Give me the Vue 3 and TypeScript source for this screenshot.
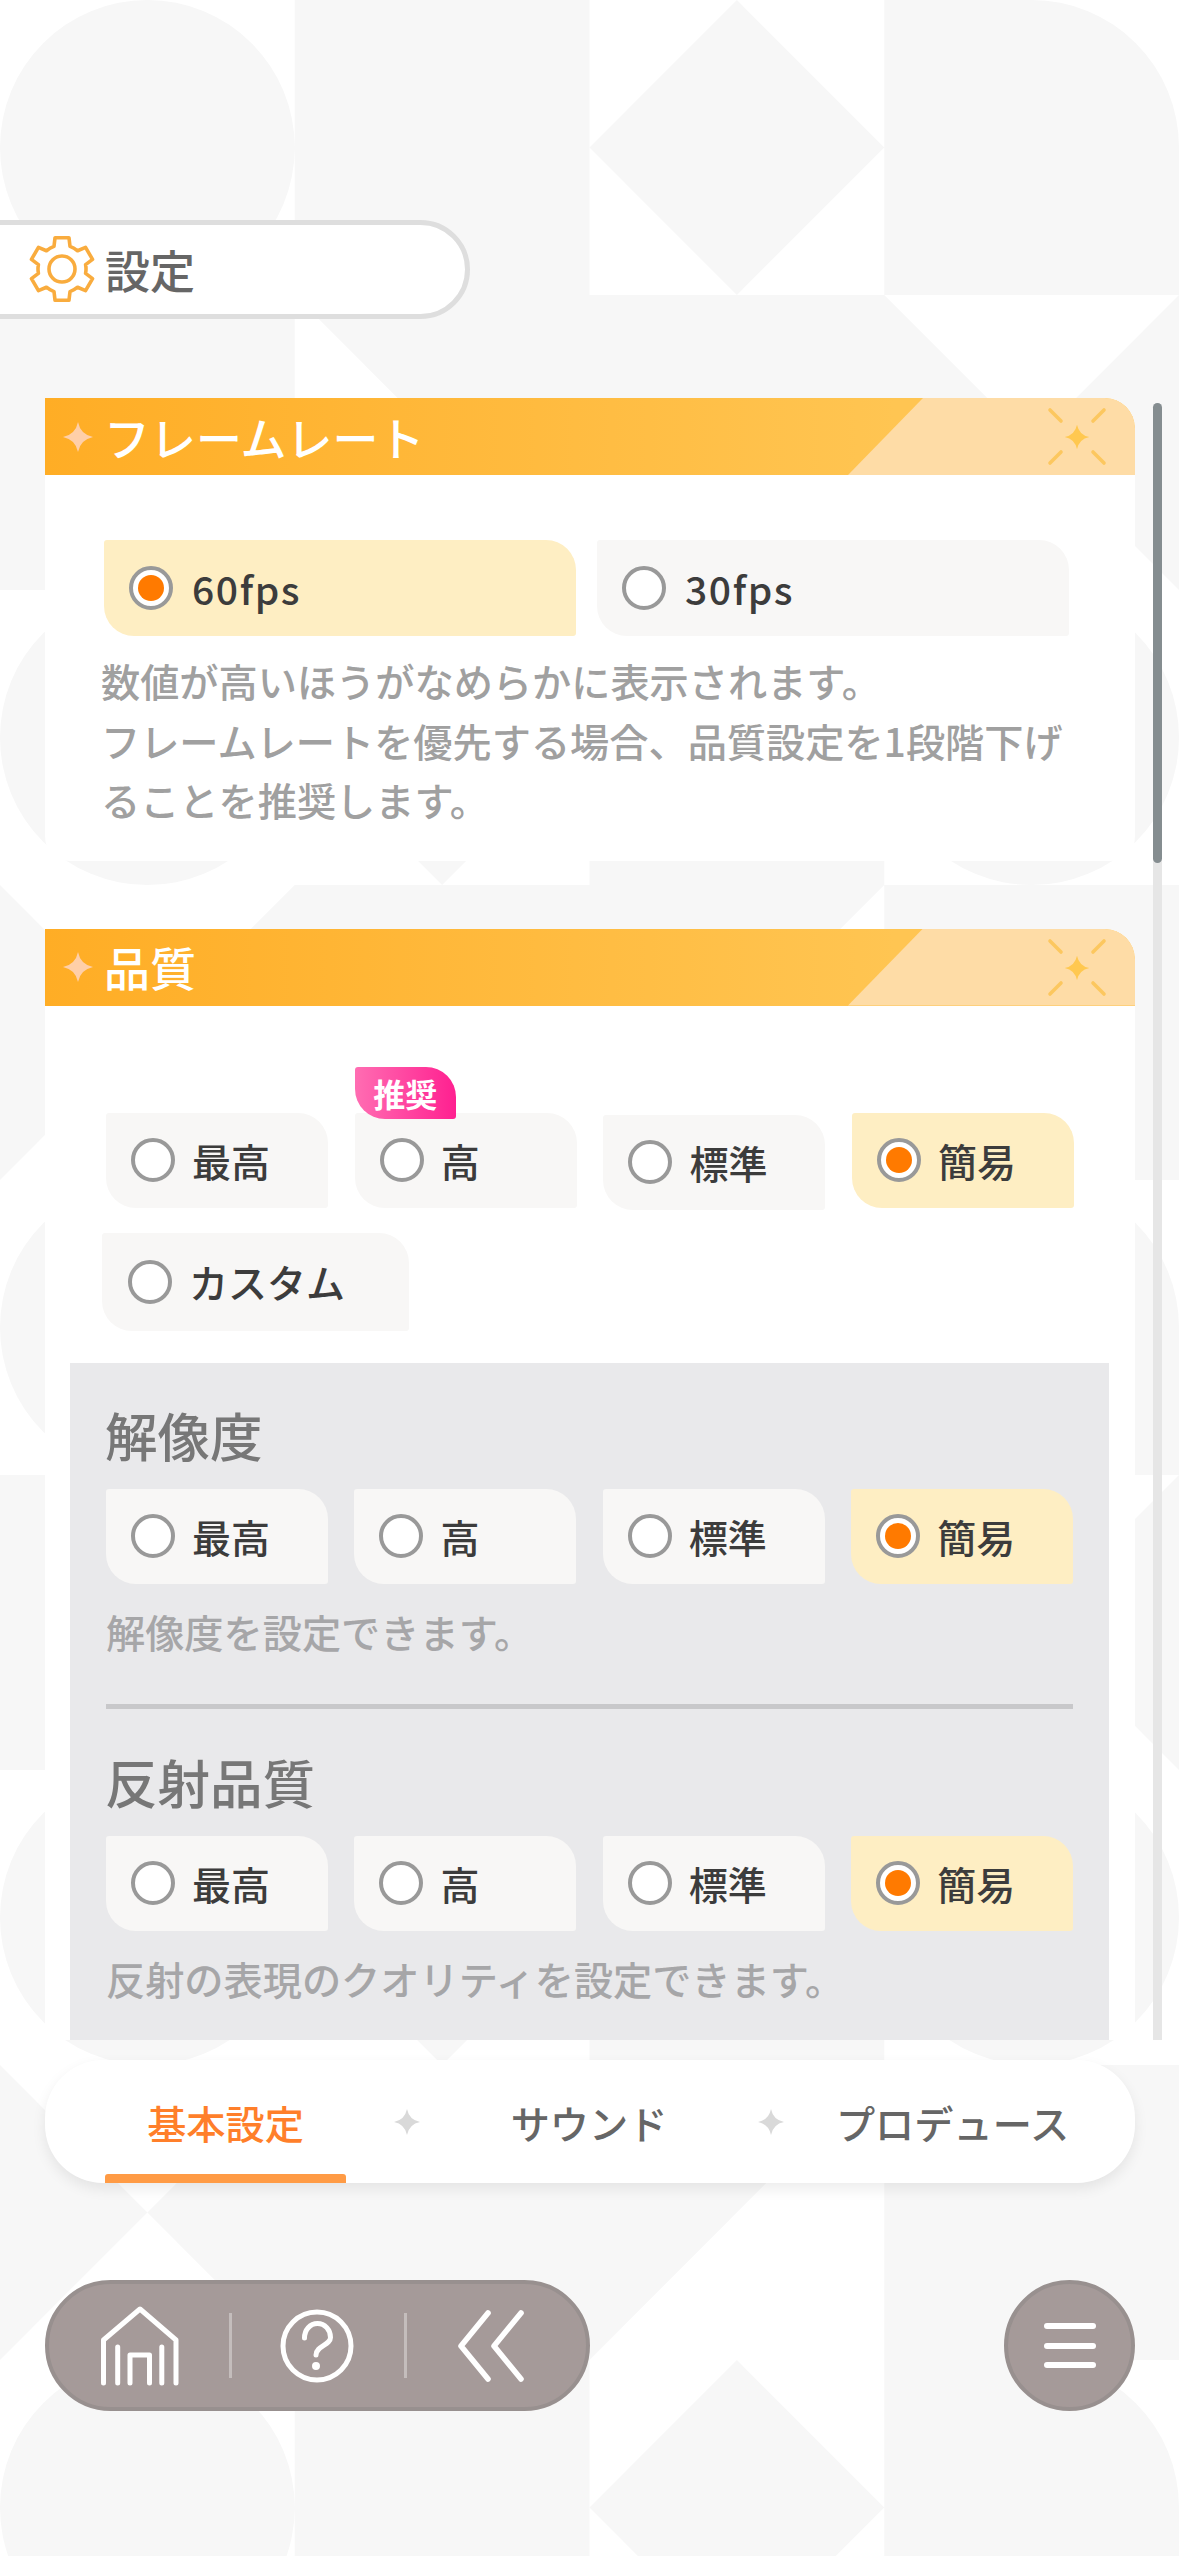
<script setup lang="ts">
const W = 294.75
const H = 295

function cellPath(kind: string, x: number, y: number): string {
  const r = W / 2
  const cx = x + W / 2
  const cy = y + H / 2
  const xr = x + W
  const yb = y + H
  switch (kind) {
    case 'circle':
      return `M${x},${cy}A${r},${H / 2} 0 1 1 ${xr},${cy}A${r},${H / 2} 0 1 1 ${x},${cy}Z`
    case 'solid':
      return `M${x},${y}H${xr}V${yb}H${x}Z`
    case 'diamond':
      return `M${cx},${y}L${xr},${cy}L${cx},${yb}L${x},${cy}Z`
    case 'roundTR':
      return `M${x},${y}H${cx}A${r},${H / 2} 0 0 1 ${xr},${cy}V${yb}H${x}Z`
    case 'triTR':
      return `M${x},${y}H${xr}V${yb}Z`
    case 'triUL':
      return `M${x},${y}H${xr}L${x},${yb}Z`
    case 'bowtie':
      return `M${x},${y}L${cx},${cy}L${x},${yb}ZM${xr},${y}V${yb}L${cx},${cy}Z`
  }
  return ''
}

const pattern: string[][] = [
  ['circle', 'solid', 'diamond', 'roundTR'],
  ['solid', 'triTR', 'solid', 'bowtie'],
  ['circle', 'diamond', 'solid', 'circle'],
  ['bowtie', 'solid', 'triUL', 'solid'],
]

let bgD = ''
for (let row = 0; row < 9; row++) {
  for (let col = 0; col < 4; col++) {
    bgD += cellPath(pattern[row % 4][col], col * W, row * H)
  }
}

function gearPath(): string {
  const out = 32
  const inner = 24
  const parts: string[] = []
  for (let i = 0; i < 6; i++) {
    const a = (i * Math.PI) / 3 - Math.PI / 2
    const pts = [
      [inner, a - 0.34],
      [out, a - 0.22],
      [out, a + 0.22],
      [inner, a + 0.34],
    ].map(([rad, t]) => [36 + rad * Math.cos(t), 36 + rad * Math.sin(t)])
    const p = pts.map((q) => q.map((v) => v.toFixed(2)).join(','))
    parts.push(
      i === 0 ? `M${p[0]}L${p[1]}L${p[2]}L${p[3]}` : `A${inner},${inner} 0 0 1 ${p[0]}L${p[1]}L${p[2]}L${p[3]}`,
    )
  }
  const a0 = -Math.PI / 2 - 0.34
  const end = `${(36 + inner * Math.cos(a0)).toFixed(2)},${(36 + inner * Math.sin(a0)).toFixed(2)}`
  return parts.join('') + `A${inner},${inner} 0 0 1 ${end}Z`
}
const gear = gearPath()

const star = 'M0,-15Q2.5,-2.5 15,0Q2.5,2.5 0,15Q-2.5,2.5 -15,0Q-2.5,-2.5 0,-15Z'

interface Opt {
  label: string
  on?: boolean
  badge?: string
  low?: boolean
}

const levels: Opt[] = [{ label: '最高' }, { label: '高' }, { label: '標準' }, { label: '簡易', on: true }]
const qualityRow: Opt[] = [
  { label: '最高' },
  { label: '高', badge: '推奨' },
  { label: '標準', low: true },
  { label: '簡易', on: true },
]
const subs = [
  { title: '解像度', desc: '解像度を設定できます。' },
  { title: '反射品質', desc: '反射の表現のクオリティを設定できます。' },
]
const sections = ['フレームレート', '品質']
</script>

<template>
  <div class="page">
    <svg class="bg" width="1179" height="2556" viewBox="0 0 1179 2556">
      <path :d="bgD" fill="#f7f7f7" />
    </svg>

    <div class="title-pill">
      <svg class="gear" width="72" height="72" viewBox="0 0 72 72">
        <path :d="gear" fill="none" stroke="#f9ac3e" stroke-width="3.6" stroke-linejoin="round" />
        <circle cx="36" cy="36" r="13" fill="none" stroke="#f9ac3e" stroke-width="3.6" />
      </svg>
      <span class="title-text">設定</span>
    </div>

    <div class="scroll">
      <div class="track"><div class="thumb"></div></div>

      <section class="panel">
        <header class="head">
          <div class="head-light"></div>
          <svg class="head-star" width="30" height="30" viewBox="-15 -15 30 30"><path :d="star" fill="#ffcfa8" /></svg>
          <span class="head-text">{{ sections[0] }}</span>
          <svg class="head-spark" width="60" height="60" viewBox="-30 -30 60 60">
            <path :d="star" fill="#ffc850" transform="scale(.82)" />
            <path d="M-27,-27L-16,-16M27,-27L16,-16M-27,26L-16,15M27,26L16,15" stroke="#fcc75f" stroke-width="3.6" stroke-linecap="round" />
          </svg>
        </header>
        <div class="body-fps">
          <div class="row row-fps">
            <label class="opt opt-fps on"><span class="radio"><i></i></span><span class="fps">60fps</span></label>
            <label class="opt opt-fps"><span class="radio"></span><span class="fps">30fps</span></label>
          </div>
          <p class="desc desc-fps">数値が高いほうがなめらかに表示されます。<br />フレームレートを優先する場合、品質設定を1段階下げ<br />ることを推奨します。</p>
        </div>
      </section>

      <section class="panel panel-quality">
        <header class="head">
          <div class="head-light"></div>
          <svg class="head-star" width="30" height="30" viewBox="-15 -15 30 30"><path :d="star" fill="#ffcfa8" /></svg>
          <span class="head-text">{{ sections[1] }}</span>
          <svg class="head-spark" width="60" height="60" viewBox="-30 -30 60 60">
            <path :d="star" fill="#ffc850" transform="scale(.82)" />
            <path d="M-27,-27L-16,-16M27,-27L16,-16M-27,26L-16,15M27,26L16,15" stroke="#fcc75f" stroke-width="3.6" stroke-linecap="round" />
          </svg>
        </header>
        <div class="body-quality">
          <div class="row row-levels">
            <label v-for="o in qualityRow" :key="o.label" class="opt" :class="{ on: o.on, low: o.low }">
              <span v-if="o.badge" class="badge">{{ o.badge }}</span>
              <span class="radio"><i v-if="o.on"></i></span><span>{{ o.label }}</span>
            </label>
          </div>
          <div class="row row-custom">
            <label class="opt opt-custom"><span class="radio"></span><span>カスタム</span></label>
          </div>

          <div class="sub-box">
            <template v-for="(s, i) in subs" :key="s.title">
              <div v-if="i > 0" class="divider"></div>
              <h3 class="sub-title">{{ s.title }}</h3>
              <div class="row row-sub">
                <label v-for="o in levels" :key="o.label" class="opt" :class="{ on: o.on }">
                  <span class="radio"><i v-if="o.on"></i></span><span>{{ o.label }}</span>
                </label>
              </div>
              <p class="desc desc-sub">{{ s.desc }}</p>
            </template>
          </div>
        </div>
      </section>
    </div>

    <nav class="tabs">
      <div class="tab active">基本設定</div>
      <div class="tab-sep"><svg width="26" height="28" viewBox="-15 -15 30 30"><path :d="star" fill="#d9d9d9" /></svg></div>
      <div class="tab">サウンド</div>
      <div class="tab-sep"><svg width="26" height="28" viewBox="-15 -15 30 30"><path :d="star" fill="#d9d9d9" /></svg></div>
      <div class="tab">プロデュース</div>
    </nav>

    <div class="bottom">
      <div class="nav-pill">
        <svg width="78" height="82" viewBox="1 0 78 82" fill="none" stroke="#fff" stroke-width="5" stroke-linecap="round" stroke-linejoin="round">
          <path d="M3.5,78V35L40,4L76,35V78M17.7,42V78M61.8,42V78M30,78V50H49.5V78" />
        </svg>
        <span class="nav-sep"></span>
        <svg class="q" width="74" height="74" viewBox="-37 -37 74 74" fill="none" stroke="#fff" stroke-width="5" stroke-linecap="round">
          <circle r="34" />
          <path d="M-12.5,-8C-12.5,-16 -7,-22.5 .5,-22.5C8,-22.5 13.5,-16 13.5,-8.5C13.5,-1 -1,0 -1,9" />
          <circle cx="-1" cy="20" r="2.5" fill="#fff" stroke-width="3" />
        </svg>
        <span class="nav-sep"></span>
        <svg width="70" height="74" viewBox="0 0 70 74" fill="none" stroke="#fff" stroke-width="5.6" stroke-linecap="round" stroke-linejoin="round">
          <path d="M32,4L5,37L32,70M65,4L38,37L65,70" />
        </svg>
      </div>
      <button class="menu" type="button" aria-label="menu">
        <span></span><span></span><span></span>
      </button>
    </div>
  </div>
</template>

<style>
html,
body {
  margin: 0;
  background: #fff;
}
</style>

<style scoped>
.page {
  position: relative;
  width: 1179px;
  height: 2556px;
  overflow: hidden;
  background: #fff;
  font-family: "Noto Sans CJK JP", "Noto Sans", sans-serif;
  padding-top: 220px;
  box-sizing: border-box;
}
.bg {
  position: absolute;
  left: 0;
  top: 0;
}
.title-pill {
  position: relative;
  box-sizing: border-box;
  width: 520px;
  height: 99px;
  margin-left: -50px;
  padding-left: 71px;
  display: flex;
  align-items: center;
  gap: 7px;
  background: #fff;
  border: 5px solid #dedede;
  border-radius: 50px;
}
.gear {
  margin-top: -2px;
}
.title-text {
  font-size: 45px;
  font-weight: 500;
  color: #666;
  line-height: 1;
}
.scroll {
  position: relative;
  height: 1642px;
  margin-top: 79px;
  padding-left: 45px;
  overflow: hidden;
}
.track {
  position: absolute;
  left: 1153px;
  top: 5px;
  bottom: 0;
  width: 9px;
  background: #e6e6e6;
  border-radius: 5px 5px 0 0;
}
.thumb {
  height: 460px;
  background: #858d90;
  border-radius: 5px;
}
.panel {
  position: relative;
  width: 1090px;
  background: rgba(255, 255, 255, 0.92);
  border-radius: 0 30px 24px 24px;
  overflow: hidden;
}
.panel-quality {
  margin-top: 68px;
}
.head {
  position: relative;
  height: 77px;
  display: flex;
  align-items: center;
  padding-left: 18px;
  gap: 11px;
  background: linear-gradient(90deg, #ffad25 0%, #ffc552 78%);
  border-radius: 0 30px 0 0;
  overflow: hidden;
}
.head-light {
  position: absolute;
  right: 0;
  top: 0;
  width: 287px;
  height: 100%;
  background: #fedca6;
  clip-path: polygon(75px 0, 100% 0, 100% 100%, 0 100%);
}
.head-star,
.head-text {
  position: relative;
}
.head-text {
  color: #fff;
  font-size: 46px;
  font-weight: 500;
  line-height: 1;
  margin-top: -2px;
}
.head-spark {
  position: absolute;
  left: 1002px;
  top: 9px;
}
.body-fps {
  padding: 65px 0 31px 58px;
}
.body-quality {
  padding-top: 107px;
}
.row {
  display: flex;
}
.row-fps {
  gap: 21px;
}
.row-levels,
.row-sub {
  gap: 26.7px;
}
.row-levels {
  margin-left: 61px;
}
.row-custom {
  margin: 25px 0 0 57px;
}
.opt {
  position: relative;
  box-sizing: border-box;
  width: 222px;
  height: 95px;
  display: flex;
  align-items: center;
  gap: 17px;
  padding-left: 25px;
  background: #f8f7f6;
  border-radius: 3px 30px 3px 30px;
  color: #3c3c3c;
  font-size: 39px;
  font-weight: 500;
  line-height: 1;
}
.opt.on {
  background: #feeec3;
}
.opt.low {
  transform: translateY(2px);
}
.fps {
  letter-spacing: 1.6px;
}
.opt-fps {
  width: 472px;
  height: 96px;
  gap: 19px;
}
.opt-fps:first-child {
  margin-left: 1px;
}
.opt-custom {
  width: 307px;
  height: 98px;
  padding-left: 26px;
}
.radio {
  box-sizing: border-box;
  flex: none;
  width: 44px;
  height: 44px;
  border-radius: 50%;
  border: 4.5px solid #999;
  background: #fff;
  display: flex;
  align-items: center;
  justify-content: center;
}
.radio i {
  display: block;
  width: 26px;
  height: 26px;
  border-radius: 50%;
  background: #ff7a00;
}
.badge {
  position: absolute;
  left: 0;
  top: -46px;
  width: 101px;
  height: 52px;
  display: flex;
  align-items: center;
  justify-content: center;
  background: linear-gradient(90deg, #ff6db2, #ff2090);
  border-radius: 3px 30px 3px 30px;
  color: #fff;
  font-size: 32px;
  font-weight: 700;
}
.desc {
  margin: 0;
  color: #a0a0a0;
  font-weight: 500;
  white-space: nowrap;
}
.desc-fps {
  margin: 15px 0 0 -2px;
  font-size: 39.2px;
  line-height: 59.5px;
}
.sub-box {
  width: 1039px;
  box-sizing: border-box;
  margin: 32px 0 0 25px;
  padding: 33px 36px 40px;
  background: #e9e9eb;
}
.sub-title {
  margin: 0 0 0 -1px;
  color: #777;
  font-size: 52.5px;
  font-weight: 500;
  line-height: 76px;
}
.row-sub {
  margin-top: 17px;
}
.desc-sub {
  margin-top: 17px;
  font-size: 39.2px;
  line-height: 60px;
  color: #a6a6a8;
}
.divider {
  height: 5px;
  margin: 43px 0 34px;
  background: #c8c8ca;
}
.tabs {
  position: relative;
  box-sizing: border-box;
  width: 1090px;
  height: 123px;
  margin: 20px 0 0 45px;
  padding-left: 60px;
  display: flex;
  background: #fff;
  border-radius: 58px;
  box-shadow: 0 6px 14px rgba(0, 0, 0, 0.08);
  overflow: hidden;
}
.tab {
  position: relative;
  flex: none;
  width: 241px;
  display: flex;
  align-items: center;
  justify-content: center;
  color: #666;
  font-size: 39.2px;
  font-weight: 500;
}
.tab.active {
  color: #ff7f2a;
}
.tab.active::after {
  content: "";
  position: absolute;
  left: 0;
  right: 0;
  bottom: 0;
  height: 9px;
  background: #ff9b45;
  border-radius: 3px 3px 0 0;
}
.tab-sep {
  flex: none;
  width: 122.5px;
  display: flex;
  align-items: center;
  justify-content: center;
}
.bottom {
  position: relative;
  display: flex;
  justify-content: space-between;
  margin: 97px 44px 0 45px;
}
.nav-pill {
  box-sizing: border-box;
  width: 545px;
  height: 131px;
  padding-left: 52px;
  display: flex;
  align-items: center;
  gap: 49.5px;
  background: #a59a99;
  border: 4px solid #98908f;
  border-radius: 66px;
}
.q {
  margin-left: -1px;
}
.nav-sep {
  flex: none;
  width: 3px;
  height: 65px;
  background: rgba(255, 255, 255, 0.35);
}
.menu {
  box-sizing: border-box;
  width: 131px;
  height: 131px;
  padding: 0;
  display: flex;
  flex-direction: column;
  align-items: center;
  justify-content: center;
  gap: 13.5px;
  background: #a59a99;
  border: 4px solid #98908f;
  border-radius: 50%;
}
.menu span {
  display: block;
  width: 52px;
  height: 6px;
  background: #fff;
  border-radius: 3px;
}
</style>
